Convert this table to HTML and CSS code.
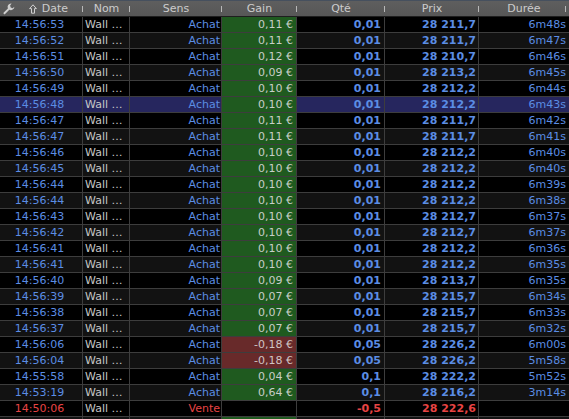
FILE: index.html
```html
<!DOCTYPE html>
<html lang="fr">
<head>
<meta charset="utf-8">
<title>Ordres</title>
<link rel="stylesheet" href="styles.css">
</head>
<body>
<div class="grid">
  <div class="hrow">
    <div class="hc hdate">
      <svg class="wrench" width="12" height="12" viewBox="0 0 12 12"><path d="M8 0.4 A3.6 3.6 0 0 0 4.9 5.4 L0.7 9.6 A1 1 0 0 0 2.1 11 L6.3 6.8 A3.6 3.6 0 0 0 11.4 3.7 L9.6 5.2 L7.7 4.6 L7.1 2.6 L8.6 0.5 Z" fill="#cfcfcf"/></svg>
      <span class="hdlabel"><svg class="arrow" width="8" height="10" viewBox="0 0 8 10"><path d="M4 0.8 L7.4 4.6 L5.5 4.6 L5.5 9.2 L2.5 9.2 L2.5 4.6 L0.6 4.6 Z" fill="none" stroke="#cfcfcf" stroke-width="1"/></svg>Date</span>
    </div>
    <div class="hc">Nom</div>
    <div class="hc">Sens</div>
    <div class="hc">Gain</div>
    <div class="hc">Qté</div>
    <div class="hc">Prix</div>
    <div class="hc hlast">Durée</div>
  </div>
  <div id="rows"></div>
</div>
<script src="app.js"></script>
</body>
</html>
```
FILE: styles.css
```css
html, body {
  margin: 0;
  padding: 0;
  background: #000;
  overflow: hidden;
}
body {
  font-family: "DejaVu Sans", sans-serif;
  font-size: 11px;
  width: 569px;
  height: 419px;
}
.grid {
  width: 569px;
}
.hrow, .row {
  display: grid;
  grid-template-columns: 83px 47px 92px 75px 88px 94px 90px;
}
.hrow {
  height: 17px;
  background: linear-gradient(#5e5e5e, #575757);
  border-top: 1px solid #46505e;
  border-bottom: 1px solid #1e1e1e;
  box-sizing: border-box;
  color: #cccccc;
}
.hc {
  line-height: 15px;
  text-align: center;
  white-space: nowrap;
  background: linear-gradient(#b8b8b8, #b8b8b8) right 5px / 1px 6px no-repeat;
}
.hlast {
  background-position: right 3px top 5px;
}
.hdate {
  display: flex;
  align-items: center;
}
.wrench {
  margin-left: 3px;
  flex: none;
}
.hdlabel {
  flex: 1;
  display: flex;
  justify-content: center;
  align-items: center;
  gap: 5px;
  padding-right: 1px;
}
.row {
  height: 16px;
}
.row.odd { background: #000; }
.row.even { background: #121212; }
.row.sel { background: #26265e; }
.c {
  box-sizing: border-box;
  border-right: 1px solid #3d3d3d;
  border-bottom: 1px solid #3d3d3d;
  line-height: 15px;
  white-space: nowrap;
  overflow: hidden;
  color: #5b8de4;
  padding: 0 2px;
}
.c.date { text-align: center; padding: 0 3px 0 0; }
.c.nom { color: #c6c6c6; text-align: left; }
.c.sens { text-align: right; padding-right: 1px; }
.c.gain { text-align: right; color: #c8cec8; padding-right: 3px; }
.c.gain.pos { background: #1f5a1f; }
.c.gain.neg { background: #682a2a; color: #d0c4c4; }
.c.qte { text-align: right; font-weight: bold; padding-right: 3px; }
.c.prix { text-align: right; font-weight: bold; padding-right: 2px; }
.c.duree { text-align: right; border-right: none; padding-right: 3px; }
.red { color: #e84444; }
```
FILE: app.js
```js
var data = [
  ["14:56:53","Achat","0,11","0,01","28 211,7","6m48s"],
  ["14:56:52","Achat","0,11","0,01","28 211,7","6m47s"],
  ["14:56:51","Achat","0,12","0,01","28 210,7","6m46s"],
  ["14:56:50","Achat","0,09","0,01","28 213,2","6m45s"],
  ["14:56:49","Achat","0,10","0,01","28 212,2","6m44s"],
  ["14:56:48","Achat","0,10","0,01","28 212,2","6m43s"],
  ["14:56:47","Achat","0,11","0,01","28 211,7","6m42s"],
  ["14:56:47","Achat","0,11","0,01","28 211,7","6m41s"],
  ["14:56:46","Achat","0,10","0,01","28 212,2","6m40s"],
  ["14:56:45","Achat","0,10","0,01","28 212,2","6m40s"],
  ["14:56:44","Achat","0,10","0,01","28 212,2","6m39s"],
  ["14:56:44","Achat","0,10","0,01","28 212,2","6m38s"],
  ["14:56:43","Achat","0,10","0,01","28 212,7","6m37s"],
  ["14:56:42","Achat","0,10","0,01","28 212,7","6m37s"],
  ["14:56:41","Achat","0,10","0,01","28 212,2","6m36s"],
  ["14:56:41","Achat","0,10","0,01","28 212,2","6m35s"],
  ["14:56:40","Achat","0,09","0,01","28 213,7","6m35s"],
  ["14:56:39","Achat","0,07","0,01","28 215,7","6m34s"],
  ["14:56:38","Achat","0,07","0,01","28 215,7","6m33s"],
  ["14:56:37","Achat","0,07","0,01","28 215,7","6m32s"],
  ["14:56:06","Achat","-0,18","0,05","28 226,2","6m00s"],
  ["14:56:04","Achat","-0,18","0,05","28 226,2","5m58s"],
  ["14:55:58","Achat","0,04","0,1","28 222,2","5m52s"],
  ["14:53:19","Achat","0,64","0,1","28 216,2","3m14s"],
  ["14:50:06","Vente","","-0,5","28 222,6",""]
];
var host = document.getElementById("rows");
var html = "";
data.forEach(function (d, i) {
  var cls = i === 5 ? "sel" : (i % 2 === 0 ? "odd" : "even");
  var sell = d[1] === "Vente";
  var r = sell ? " red" : "";
  var g = d[2] === "" ? "" : (d[2].charAt(0) === "-" ? " neg" : " pos");
  html += '<div class="row ' + cls + '">' +
    '<div class="c date' + r + '">' + d[0] + '</div>' +
    '<div class="c nom">Wall …</div>' +
    '<div class="c sens' + r + '">' + d[1] + '</div>' +
    '<div class="c gain' + g + '">' + (d[2] ? d[2] + " €" : "") + '</div>' +
    '<div class="c qte' + r + '">' + d[3] + '</div>' +
    '<div class="c prix' + r + '">' + d[4] + '</div>' +
    '<div class="c duree' + r + '">' + d[5] + '</div>' +
    '</div>';
});
/* next row, scrolled just out of view: only its cell colours show */
html += '<div class="row even"><div class="c date"></div><div class="c nom"></div>' +
  '<div class="c sens"></div><div class="c gain pos"></div><div class="c qte"></div>' +
  '<div class="c prix"></div><div class="c duree"></div></div>';
host.innerHTML = html;
```
